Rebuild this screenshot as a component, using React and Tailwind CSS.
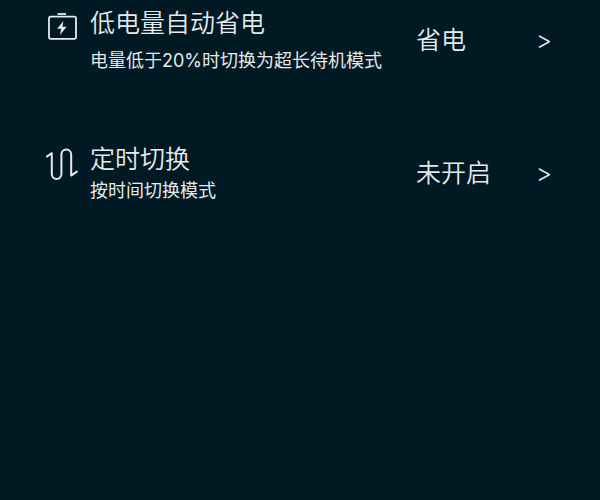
import React from "react";

const BatteryIcon = () => (
  <svg
    className="h-8 w-8 shrink-0"
    viewBox="0 0 32 32"
    fill="none"
    stroke="currentColor"
    strokeWidth="1.8"
    aria-hidden="true"
  >
    <path d="M11.5 2h8.5" />
    <rect x="3" y="4.6" width="27" height="22.2" rx="1.8" />
    <path
      d="M17.4 9l-6.2 7.8h4l-1.2 6.2 6.6-8.2h-4.2z"
      fill="currentColor"
      stroke="none"
    />
  </svg>
);

const SwitchIcon = () => (
  <svg
    className="h-8 w-8 shrink-0"
    viewBox="0 0 32 32"
    fill="none"
    stroke="currentColor"
    strokeWidth="2"
    strokeLinecap="round"
    strokeLinejoin="round"
    aria-hidden="true"
  >
    <path d="M.8 8.6l5-3.4v21a4.8 4.8 0 0 0 9.6 0V6.4a4.8 4.8 0 0 1 9.8 0v21.2l5.6-4" />
  </svg>
);

const modes = [
  {
    id: "low-battery",
    icon: <BatteryIcon />,
    title: "低电量自动省电",
    description: "电量低于20%时切换为超长待机模式",
    value: "省电",
    spacing: "gap-2.5",
  },
  {
    id: "schedule",
    icon: <SwitchIcon />,
    title: "定时切换",
    description: "按时间切换模式",
    value: "未开启",
    spacing: "gap-1",
  },
];

const SettingRow = ({ icon, title, description, value, spacing }) => {
  return (
    <button
      type="button"
      className="flex w-full items-start pr-12 pl-[46px] text-left"
    >
      <span className="pt-[5px]">{icon}</span>
      <span className={`flex flex-1 flex-col pl-3 whitespace-nowrap ${spacing}`}>
        <span className="text-[25px] leading-8">{title}</span>
        <span className="text-[18px] leading-6 font-normal">{description}</span>
      </span>
      <span className="flex w-[136px] shrink-0 items-center justify-between self-center text-[25px] leading-8">
        <span>{value}</span>
        <span>&gt;</span>
      </span>
    </button>
  );
};

export default function App() {
  return (
    <main className="min-h-screen bg-[#001923] pt-[7px] font-['Inter','Noto_Sans_CJK_SC',sans-serif] font-[350] text-[#e6eaec]">
      <div className="flex flex-col gap-[70px]">
        {modes.map((mode) => (
          <SettingRow key={mode.id} {...mode} />
        ))}
      </div>
    </main>
  );
}
